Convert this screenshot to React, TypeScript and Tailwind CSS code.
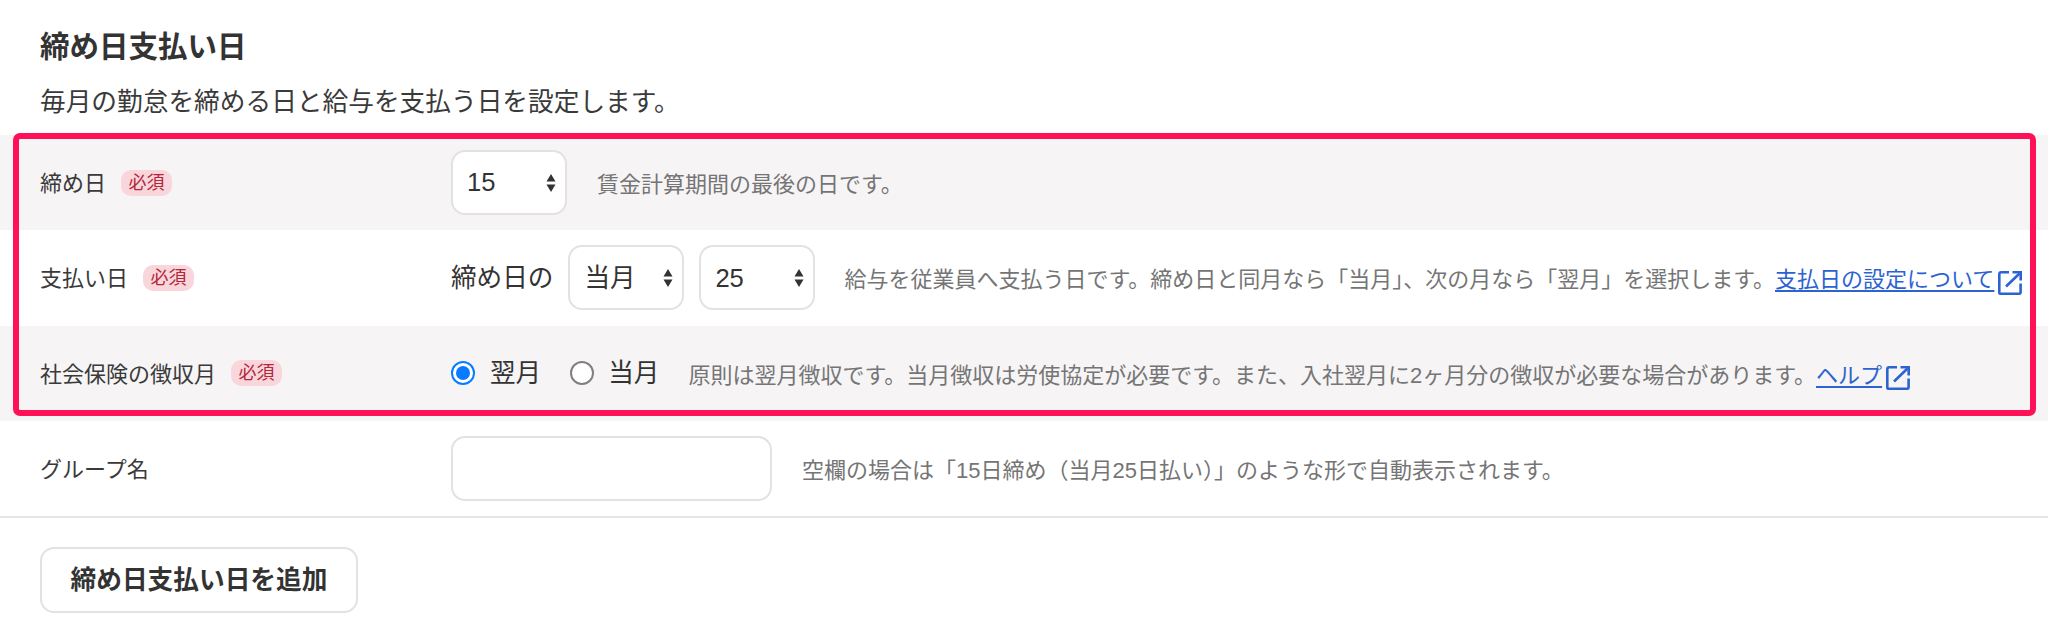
import React from "react";

const FONT = "font-['Liberation_Sans','Noto_Sans_CJK_JP',sans-serif]";

function Badge() {
  return (
    <span className="ml-[15px] inline-flex h-[26px] w-[51px] items-center justify-center rounded-[10px] bg-[#f9d6db] text-[18px] leading-none text-[#b3263c]">
      必須
    </span>
  );
}

function ExternalIcon() {
  return (
    <svg viewBox="0 0 24 25" width="24" height="25" fill="none" stroke="#2c63d1" strokeWidth="2.6" className="ml-[4px] mt-[9px] shrink-0">
      <path d="M11 2.3H3.2A2 2 0 0 0 1.3 4.2v18.4a1.3 1.3 0 0 0 1.3 1.2h18.6a1.4 1.4 0 0 0 1.4-1.3V13.5" />
      <path d="M8 16.5 21.5 3.5" />
      <path d="M14.5 2.3h8.2v8.2" />
    </svg>
  );
}

function Sel({ value }: { value: string }) {
  return (
    <div className="relative h-[65px] w-[116px] shrink-0">
      <select
        defaultValue={value}
        className={`${FONT} h-full w-full appearance-none rounded-[14px] border-2 border-[#e2e2e2] bg-white pl-[14px] text-[25.6px] text-[#333]`}
      >
        <option>{value}</option>
      </select>
      <svg viewBox="0 0 10 18" width="10" height="18" className="pointer-events-none absolute right-[11px] top-[24px]" fill="#333">
        <path d="M5 0l4.5 7.5H.5zM5 18 .5 10.5h9z" />
      </svg>
    </div>
  );
}

function Radio({ checked }: { checked?: boolean }) {
  return checked ? (
    <span className="flex h-6 w-6 shrink-0 items-center justify-center rounded-full border-2 border-[#0a7bff] bg-white">
      <span className="h-[14px] w-[14px] rounded-full bg-[#0a7bff]" />
    </span>
  ) : (
    <span className="ml-[29px] block h-6 w-6 shrink-0 rounded-full border-2 border-[#808080] bg-white" />
  );
}

function Row({ label, required, bg, children }: { label: string; required?: boolean; bg?: string; children: React.ReactNode }) {
  return (
    <div className={`flex h-[95.33px] items-center pl-10 ${bg ?? ""}`}>
      <div className="flex w-[411px] shrink-0 items-center text-[22px] text-[#3a3a3a]">
        <span className="mt-[2px]">{label}</span>
        {required && <Badge />}
      </div>
      <div className="flex items-center whitespace-nowrap">{children}</div>
    </div>
  );
}

const help = "mt-[4px] text-[22px] text-[#757575]";
const link = "mt-[4px] text-[22px] text-[#2c63d1] underline underline-offset-[3px]";

export default function App() {
  return (
    <div className={`${FONT} h-[630px] w-[2048px] overflow-hidden bg-white`}>
      <div className="h-[135px] pl-10 pt-[27px]">
        <h1 className="text-[29.5px] font-bold leading-10 text-[#333]">締め日支払い日</h1>
        <p className="mt-[17px] text-[25.7px] leading-9 text-[#3a3a3a]">毎月の勤怠を締める日と給与を支払う日を設定します。</p>
      </div>

      <div className="relative">
        <Row label="締め日" required bg="bg-[#f6f4f5]">
          <Sel value="15" />
          <span className={`ml-[30px] ${help}`}>賃金計算期間の最後の日です。</span>
        </Row>
        <Row label="支払い日" required>
          <span className="text-[25.6px] text-[#333]">締め日の</span>
          <span className="ml-[15px]"><Sel value="当月" /></span>
          <span className="ml-[15px]"><Sel value="25" /></span>
          <span className={`ml-[29px] ${help}`}>給与を従業員へ支払う日です。締め日と同月なら「当月」、次の月なら「翌月」を選択します。</span>
          <a className={link}>支払日の設定について</a>
          <ExternalIcon />
        </Row>
        <Row label="社会保険の徴収月" required bg="bg-[#f6f4f5]">
          <Radio checked />
          <span className="ml-[15px] text-[25.6px] text-[#333]">翌月</span>
          <Radio />
          <span className="ml-[14px] text-[25.6px] text-[#333]">当月</span>
          <span className={`ml-[29px] ${help}`}>原則は翌月徴収です。当月徴収は労使協定が必要です。また、入社翌月に2ヶ月分の徴収が必要な場合があります。</span>
          <a className={link}>ヘルプ</a>
          <ExternalIcon />
        </Row>
        <div className="pointer-events-none absolute left-[13px] right-[12px] top-[-2px] h-[283px] rounded-[7px] border-[6.5px] border-[#ff1158]" />
      </div>

      <div className="border-b-2 border-[#e6e6e6]">
        <Row label="グループ名">
          <input className="h-[65px] w-[321px] rounded-[14px] border-2 border-[#e2e2e2] bg-white" />
          <span className={`ml-[30px] ${help}`}>空欄の場合は「15日締め（当月25日払い）」のような形で自動表示されます。</span>
        </Row>
      </div>

      <div className="pl-10 pt-[29px]">
        <button className="h-[66px] w-[318px] rounded-[14px] border-2 border-[#e2e2e2] bg-white text-[25.7px] font-bold text-[#333]">
          締め日支払い日を追加
        </button>
      </div>
    </div>
  );
}
